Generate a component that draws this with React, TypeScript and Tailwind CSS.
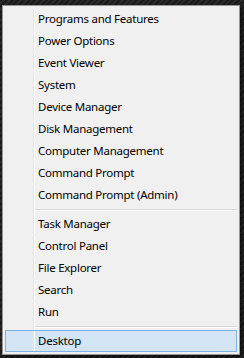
const groups: string[][] = [
  [
    'Programs and Features',
    'Power Options',
    'Event Viewer',
    'System',
    'Device Manager',
    'Disk Management',
    'Computer Management',
    'Command Prompt',
    'Command Prompt (Admin)',
  ],
  ['Task Manager', 'Control Panel', 'File Explorer', 'Search', 'Run'],
  ['Desktop'],
];

const Gutter = () => (
  <div className="w-[28px] shrink-0 self-stretch border-r border-[#e2e3e3] shadow-[1px_0_0_#ffffff]" />
);

const MenuItem = ({ label, active }: { label: string; active?: boolean }) => (
  <div
    className={
      active
        ? 'flex h-[22px] items-stretch border border-[#7eb0e6] bg-[#d3e4f5]'
        : 'flex h-[22px] items-stretch border border-transparent'
    }
  >
    <Gutter />
    <span className="flex items-center pl-[4px] text-[11.5px] leading-none tracking-[-0.25px] text-black">
      {label}
    </span>
  </div>
);

const Separator = () => (
  <div className="flex h-[7px] items-stretch">
    <div className="w-[29px] shrink-0 border-r border-[#e2e3e3] shadow-[1px_0_0_#ffffff]" />
    <div className="flex flex-1 items-center pl-[1px]">
      <div className="h-[2px] w-full border-t border-[#d7d7d7] border-b border-b-white" />
    </div>
  </div>
);

export default function App() {
  return (
    <div
      className="h-[358px] w-[244px] overflow-hidden pt-[5px] pl-[2px]"
      style={{
        fontFamily: '"Noto Sans", "Segoe UI", sans-serif',
        background:
          'repeating-linear-gradient(135deg, #1b1b1b 0px, #1b1b1b 2px, #2a2a2a 2px, #2a2a2a 4px)',
      }}
    >
      <div className="flex h-[350px] w-[238px] flex-col border border-[#979797] bg-[#f0f0f0] p-[2px] shadow-[2px_2px_4px_rgba(0,0,0,0.6)]">
        {groups.map((items, gi) => (
          <div key={gi} className="flex flex-col">
            {gi > 0 && <Separator />}
            {items.map((label) => (
              <MenuItem key={label} label={label} active={label === 'Desktop'} />
            ))}
          </div>
        ))}
      </div>
    </div>
  );
}
